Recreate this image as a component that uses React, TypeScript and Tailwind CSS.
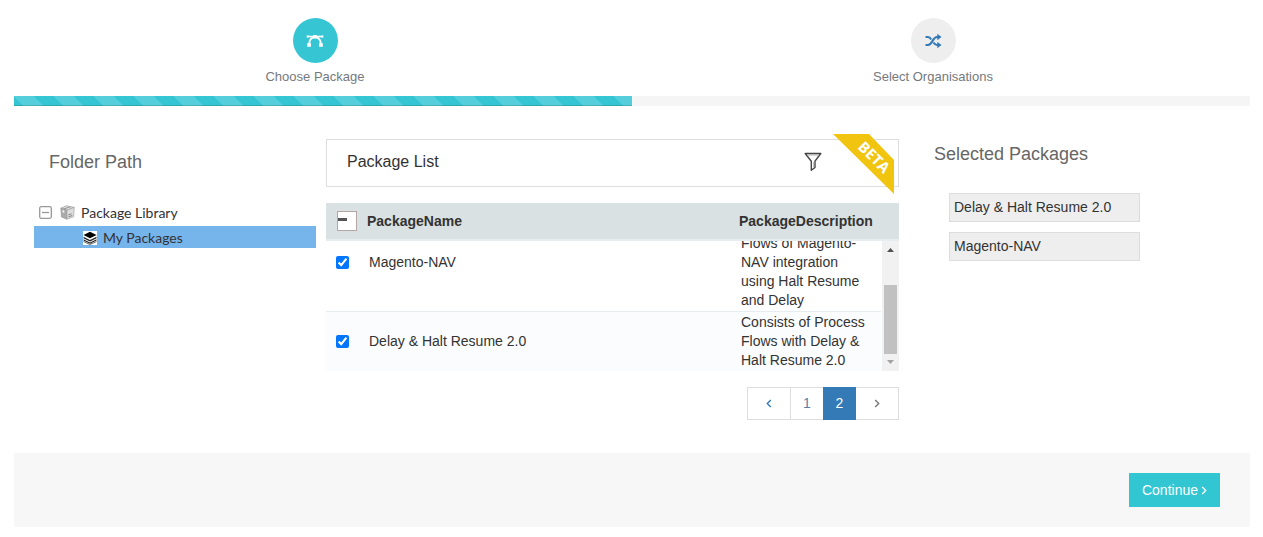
import React, { useState } from "react";

function BezierIcon() {
  return (
    <svg viewBox="0 0 18 14" className="h-[14px] w-[18px]" fill="none" stroke="white" aria-hidden="true">
      <path d="M1 2.500h16" strokeWidth="1.500" />
      <path d="M3.200 10.500C3.200 6 5.500 3 9 3s5.800 3 5.800 7.500" strokeWidth="2" />
      <path d="M7.200 1h3.600v3.400H7.200zM1.200 9.300h3.800v3.500H1.200zM13 9.300h3.800v3.500H13zM.7 1.500h2v2h-2zM15.300 1.500h2v2h-2z" fill="white" stroke="none" />
    </svg>
  );
}

function ShuffleIcon() {
  return (
    <svg viewBox="0 0 18 16" className="h-[16px] w-[18px]" fill="none" stroke="#337ab7" strokeWidth="2.200" aria-hidden="true">
      <path d="M1.500 4H4c1.500 0 2.300 1 3.200 2.500M9.500 9.500c1 1.500 2 2.500 3.500 2.500h1.500" />
      <path d="M1.500 12H4c4.500 0 4.500-8 9-8h1.500" />
      <path d="M13.300.8v6.400l4.200-3.200zM13.300 8.800v6.400l4.200-3.200z" fill="#337ab7" stroke="none" />
    </svg>
  );
}

function FunnelIcon() {
  return (
    <svg viewBox="0 0 18 20" className="h-[20px] w-[18px]" fill="none" stroke="#444" aria-hidden="true">
      <path d="M1.200 1.500h15.600L11 9.200v6.300L7.300 18.300V9.200z" strokeWidth="1.400" strokeLinejoin="round" />
      <path d="M3 3h12" stroke="#aaa" strokeWidth="1" />
      <path d="M9.600 10v5.500" stroke="#bbb" strokeWidth="1" />
    </svg>
  );
}

function CollapseIcon() {
  return (
    <svg viewBox="0 0 13 13" className="h-[13px] w-[13px]" fill="none" stroke="#999" aria-hidden="true">
      <rect x=".7" y=".7" width="11.600" height="11.600" rx="1.500" strokeWidth="1.300" />
      <path d="M3 6.500h7" strokeWidth="1.300" />
    </svg>
  );
}

function BoxIcon() {
  return (
    <svg viewBox="0 0 15 15" className="h-[15px] w-[15px]" aria-hidden="true">
      <path d="M.8 3.200 6.500.8l7.700 1.600-7.200 2.800z" fill="#e2e2e2" stroke="#999" strokeWidth=".7" />
      <path d="M.8 3.200l6.200 2v9L1.500 12z" fill="#a9a9a9" stroke="#999" strokeWidth=".7" />
      <path d="M7 5.200l7.200-2.800-.5 9.300L7 14.200z" fill="#dedede" stroke="#a5a5a5" strokeWidth=".7" />
      <path d="M3.500 4l7-2.300" fill="none" stroke="#999" strokeWidth="1.200" />
      <path d="M2.500 5v2.500l1.800.6V5.500z" fill="#eee" />
      <path d="M8.500 11.800l3.800-1.300M8.500 9.800l3-1" fill="none" stroke="#777" strokeWidth=".9" />
    </svg>
  );
}

function StackIcon() {
  return (
    <svg viewBox="0 0 14 14" className="h-[14px] w-[14px] bg-white" aria-hidden="true">
      <path d="M7 .7 13.500 4 7 7.300.5 4z" fill="#000" />
      <path d="M.5 5.700 7 8.900l6.500-3.200v1.500L7 10.400.5 7.200zM.5 8.300 7 11.500l6.500-3.200v1.200L7 12.700.5 9.500z" fill="#222" />
      <path d="M.5 10.500 7 13.500l6.500-3" fill="none" stroke="#444" strokeWidth=".8" />
    </svg>
  );
}

function Chevron({ left = false }: { left?: boolean }) {
  return (
    <svg viewBox="0 0 6 9" className="h-[9px] w-[6px]" fill="none" stroke="currentColor" strokeWidth="1.400" aria-hidden="true">
      <path d={left ? "M4.800 1 1.300 4.500 4.800 8" : "M1.200 1l3.500 3.500L1.200 8"} />
    </svg>
  );
}

const packages = [
  { name: "Magento-NAV", description: "Consists of Process Flows of Magento-NAV integration using Halt Resume and Delay" },
  { name: "Delay & Halt Resume 2.0", description: "Consists of Process Flows with Delay & Halt Resume 2.0" },
];

function Steps() {
  return (
    <header>
      <ol className="grid grid-cols-2 pr-[21px] pl-[6px] pt-[18px] text-center text-[13px] leading-5 text-[#76797d]">
        <li className="flex flex-col items-center gap-1">
          <span className="flex h-[45px] w-[45px] items-center justify-center rounded-full bg-[#36c6d3]">
            <BezierIcon />
          </span>
          Choose Package
        </li>
        <li className="flex flex-col items-center gap-1">
          <span className="flex h-[45px] w-[45px] items-center justify-center rounded-full bg-[#eeeeee]">
            <ShuffleIcon />
          </span>
          Select Organisations
        </li>
      </ol>
      <div className="mr-[13px] ml-[14px] mt-[9px] h-[10px] bg-[#f5f5f5]" role="progressbar" aria-label="Progress" aria-valuenow={50}>
        <div className="h-full w-1/2 bg-[#36c6d3] bg-[linear-gradient(45deg,rgba(255,255,255,.15)_25%,transparent_25%,transparent_50%,rgba(255,255,255,.15)_50%,rgba(255,255,255,.15)_75%,transparent_75%,transparent)] bg-[length:40px_40px] shadow-[inset_0_-1px_0_rgba(0,0,0,.15)]" />
      </div>
    </header>
  );
}

function FolderTree() {
  return (
    <nav aria-label="Folders" className="pt-[46px] pl-5">
      <h2 className="pl-[15px] text-[18px] leading-5 text-[#666]">Folder Path</h2>
      <ul className="mt-[29px] font-[Lato,sans-serif] text-[14px] leading-5 text-[#333]">
        <li>
          <div className="mb-[2px] flex h-[23px] items-center gap-2 pl-[5px]">
            <button type="button" aria-label="Collapse"><CollapseIcon /></button>
            <BoxIcon />
            <a href="#library" className="-ml-[2px]">Package Library</a>
          </div>
          <ul>
            <li className="flex h-[22px] items-center gap-[6px] bg-[#76b4ec] pt-[2px] pl-[49px]">
              <StackIcon />
              <a href="#mine">My Packages</a>
            </li>
          </ul>
        </li>
      </ul>
    </nav>
  );
}

function PackageList() {
  const [checked, setChecked] = useState([true, true]);
  return (
    <section className="pt-[33px]">
      <div className="relative flex h-12 items-center justify-between border border-[#ddd] pr-[76px] pl-5">
        <h2 className="pb-[2px] text-[16px] leading-5 text-[#333]">Package List</h2>
        <button type="button" aria-label="Filter" className="pb-[2px]"><FunnelIcon /></button>
        <div className="absolute -top-[6px] right-1 flex h-[60px] w-[61px] items-center justify-center bg-[#f1c40f] [clip-path:polygon(0_0,36px_0,61px_26px,61px_60px)]">
          <span className="rotate-45 pb-[27px] pl-[5px] font-['Open_Sans',sans-serif] text-[15px] leading-4 font-bold text-white">BETA</span>
        </div>
      </div>
      <table className="mt-4 w-full table-fixed border-b-2 border-[#e7ecf1] bg-[#d9e1e2] text-left text-[14px] leading-5 text-[#333]">
        <colgroup><col className="w-[41px]" /><col /><col className="w-[160px]" /></colgroup>
        <thead>
          <tr className="h-[37px]">
            <th className="pl-[11px]">
              <input type="checkbox" aria-label="Select all" className="block h-5 w-5 appearance-none border border-[#b5a6a6] bg-white bg-[linear-gradient(#555,#555)] bg-[length:9px_3px] bg-[position:0_6px] bg-no-repeat" />
            </th>
            <th>PackageName</th>
            <th>PackageDescription</th>
          </tr>
        </thead>
      </table>
      <div className="flex h-[130px]">
        <div className="flex flex-1 flex-col justify-end overflow-hidden pr-px">
          <table className="w-full shrink-0 table-fixed text-[14px] leading-[19px] text-[#333]">
            <colgroup><col className="w-[41px]" /><col /><col className="w-[142px]" /></colgroup>
            <tbody>
              {packages.map((item, i) => (
                <tr key={item.name} className="border-t border-[#e7ecf1] even:bg-[#fbfcfd]">
                  <td className="py-px pl-[10px]">
                    <input
                      type="checkbox"
                      aria-label={item.name}
                      className="block h-[13px] w-[13px]"
                      checked={checked[i]}
                      onChange={() => setChecked(checked.map((v, j) => (j === i ? !v : v)))}
                    />
                  </td>
                  <td className="py-px pl-[2px]">{item.name}</td>
                  <td className="py-px pr-2 pl-[2px]">{item.description}</td>
                </tr>
              ))}
            </tbody>
          </table>
        </div>
        <div className="flex w-[17px] flex-col items-center bg-[#f1f1f1]" aria-hidden="true">
          <svg viewBox="0 0 17 17" className="h-[17px] w-[17px]"><path d="M5 11h7L8.500 7z" fill="#505050" /></svg>
          <div className="mt-auto h-[69px] w-[13px] bg-[#c1c1c1]" />
          <svg viewBox="0 0 17 17" className="h-[17px] w-[17px]"><path d="M5 6h7l-3.500 4z" fill="#a3a3a3" /></svg>
        </div>
      </div>
      <nav aria-label="Pages" className="mt-4 flex justify-end text-[14px] text-[#337ab7]">
        <div className="flex h-[33px] border border-[#ddd]">
          <button type="button" aria-label="Previous page" className="flex w-[42px] items-center justify-center"><Chevron left /></button>
          <button type="button" className="w-[33px] border-l border-[#ddd] text-[#5a7fa6]">1</button>
          <button type="button" aria-current="page" className="-my-px w-[33px] bg-[#337ab7] text-white">2</button>
          <button type="button" aria-label="Next page" className="flex w-[42px] items-center justify-center text-[#777]"><Chevron /></button>
        </div>
      </nav>
    </section>
  );
}

function SelectedPackages() {
  return (
    <section className="pt-[37px] pl-[25px]">
      <h2 className="text-[18px] leading-[22px] text-[#666]">Selected Packages</h2>
      <ul className="mt-7 flex w-[206px] flex-col gap-[10px] pl-[15px] text-[14px] leading-5 text-[#333]">
        <li className="h-[29px] border border-[#ddd] bg-[#eee] px-1 py-[3px]">Delay &amp; Halt Resume 2.0</li>
        <li className="h-[29px] border border-[#ddd] bg-[#eee] px-1 py-[3px]">Magento-NAV</li>
      </ul>
    </section>
  );
}

export default function App() {
  return (
    <div className="bg-white pb-[10px] font-['Liberation_Sans',Arial,sans-serif]">
      <Steps />
      <main className="mr-[13px] ml-[14px] grid grid-cols-[302fr_573fr_341fr] gap-[10px]">
        <FolderTree />
        <PackageList />
        <SelectedPackages />
      </main>
      <footer className="mt-[33px] mr-[13px] ml-[14px] flex justify-end bg-[#f7f7f7] px-[30px] py-5">
        <button type="button" className="flex h-[34px] items-center gap-[3px] bg-[#32c5d2] px-[13px] text-[14px] text-white">
          Continue <Chevron />
        </button>
      </footer>
    </div>
  );
}
